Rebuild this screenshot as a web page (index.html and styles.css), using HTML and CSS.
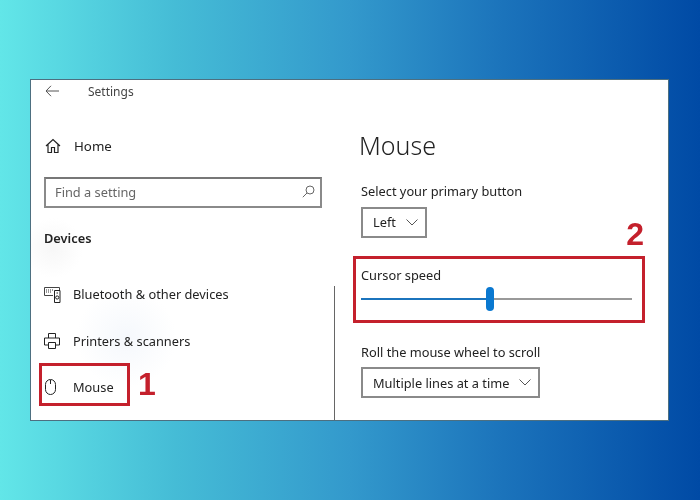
FILE: index.html
```html
<!DOCTYPE html>
<html lang="en">
<head>
<meta charset="utf-8">
<title>Settings - Mouse</title>
<link rel="stylesheet" href="styles.css">
</head>
<body>
<div class="window">
  <aside class="sidebar">
    <div class="titlebar">
      <svg class="back" width="14" height="12" viewBox="0 0 14 12"><path d="M6 .8 1 6l5 5.2M1 6h13" fill="none" stroke="#555" stroke-width="1"/></svg>
      <span class="title">Settings</span>
    </div>
    <div class="nav-item home">
      <svg class="icon" width="16" height="16" viewBox="0 0 16 16"><path d="M1 8 8 1.500 15 8M3 6.500V14.500h3.500V9.500h3V14.500H13V6.500" fill="none" stroke="#222" stroke-width="1.200"/></svg>
      <span>Home</span>
    </div>
    <div class="search">
      <span>Find a setting</span>
      <svg width="13" height="13" viewBox="0 0 13 13"><circle cx="8" cy="5" r="4" fill="none" stroke="#666"/><path d="M5 8 .8 12.200" stroke="#666" fill="none"/></svg>
    </div>
    <div class="section">Devices</div>
    <div class="nav-item bluetooth">
      <svg class="icon" width="17" height="17" viewBox="0 0 17 17"><path d="M9 9.500H.5v-8h15v2.500" fill="none" stroke="#444"/><path d="M2 4h7M2 6h5" stroke="#333" stroke-width="1.200" stroke-dasharray="1 1"/><path d="M10.500 4.500h5.500v12h-5.500z" fill="#fff" stroke="#222"/><circle cx="13.200" cy="11.500" r="1.600" fill="none" stroke="#222"/><path d="M12.500 7h1.500" stroke="#222"/></svg>
      <span>Bluetooth &amp; other devices</span>
    </div>
    <div class="nav-item printers">
      <svg class="icon" width="16" height="16" viewBox="0 0 16 16"><path d="M4.500 5V.5h7V5M4 12H.5V5h15v7H12M4.500 9.500h7v6h-7z" fill="none" stroke="#222"/></svg>
      <span>Printers &amp; scanners</span>
    </div>
    <div class="nav-item mouse">
      <svg class="icon" width="12" height="16" viewBox="0 0 12 16"><rect x=".5" y=".5" width="10" height="15" rx="5" fill="none" stroke="#222"/><path d="M5.500 1v4" stroke="#222"/></svg>
      <span>Mouse</span>
      <div class="callout callout-one"></div>
      <strong class="badge badge-one">1</strong>
    </div>
  </aside>
  <main class="content">
    <h1>Mouse</h1>
    <div class="label">Select your primary button</div>
    <div class="select select-primary">
      <span>Left</span>
      <svg width="12" height="7" viewBox="0 0 12 7"><path d="M.5.5 6 6l5.500-5.500" fill="none" stroke="#555"/></svg>
    </div>
    <div class="speed">
      <strong class="badge badge-two">2</strong>
      <div class="label">Cursor speed</div>
      <div class="slider">
        <div class="slider-fill"></div>
        <div class="slider-thumb"></div>
        <div class="slider-rest"></div>
      </div>
    </div>
    <div class="label">Roll the mouse wheel to scroll</div>
    <div class="select">
      <span>Multiple lines at a time</span>
      <svg width="12" height="7" viewBox="0 0 12 7"><path d="M.5.5 6 6l5.500-5.500" fill="none" stroke="#555"/></svg>
    </div>
  </main>
</div>
</body>
</html>
```
FILE: styles.css
```css
* { box-sizing: border-box; }
html, body { margin: 0; height: 100%; }
body {
  width: 700px;
  height: 500px;
  overflow: hidden;
  padding: 79px 31px 79px 30px;
  background: linear-gradient(90deg, #62e6e8 0%, #45bcd6 25%, #3399cc 50%, #1b73bb 72%, #004aa5 100%);
  font-family: "Noto Sans", "Open Sans", sans-serif;
  font-size: 12.800px;
  color: #222;
}
.window {
  display: flex;
  width: 639px;
  height: 342px;
  background: #fff;
  border: 1px solid #4d6f80;
  filter: blur(0.3px);
}
.sidebar {
  width: 306px;
  padding: 0 13px;
  background:
    radial-gradient(circle 50px at 95px 258px, #f5f8fc, rgba(255, 255, 255, 0)),
    radial-gradient(circle 30px at 22px 168px, #f7f7f7, rgba(255, 255, 255, 0)),
    #fff;
  position: relative;
}
.sidebar::after {
  content: "";
  position: absolute;
  right: 2px;
  top: 206px;
  bottom: 0;
  width: 1.500px;
  background: #666;
}
.titlebar {
  display: flex;
  align-items: center;
  height: 22px;
}
.back { margin-left: 1px; }
.title { margin-left: 29px; font-size: 12px; color: #444; }
.nav-item {
  display: flex;
  align-items: center;
  position: relative;
}
.nav-item span { margin-left: 13px; }
.home { margin-top: 32px; height: 24px; font-size: 13.300px; }
.home .icon { margin-left: 1px; }
.search {
  display: flex;
  align-items: center;
  justify-content: space-between;
  width: 278px;
  height: 31px;
  margin-top: 19px;
  padding: 0 5px 2px 9px;
  border: 2px solid #8a8a8a;
  border-top-color: #777;
  color: #666;
}
.section {
  margin-top: 21px;
  font-weight: 600;
  color: #222;
}
.bluetooth { margin-top: 35px; height: 24px; }
.bluetooth span { margin-left: 12px; }
.printers { margin-top: 23px; height: 24px; }
.mouse { margin-top: 22px; height: 24px; }
.mouse .icon { margin-left: 1px; }
.mouse span { margin-left: 16px; }
.callout-one {
  position: absolute;
  left: -5px;
  top: -12px;
  width: 91px;
  height: 43px;
  border: 3px solid #c4202c;
}
.badge {
  position: absolute;
  color: #c4202c;
  font-family: "Liberation Sans", Arial, sans-serif;
  font-weight: 700;
  font-size: 32px;
  line-height: 32px;
}
.badge-one { left: 94px; top: -7px; }
.badge-two { right: -2px; top: -41px; }
.content {
  flex: 1;
  padding: 0 0 0 24px;
}
h1 {
  margin: 47px 0 0 -2px;
  font-size: 25px;
  font-weight: 300;
  line-height: 36px;
  color: #222;
}
.label { line-height: 18px; }
h1 + .label { margin-top: 19px; }
.select {
  display: inline-flex;
  align-items: center;
  height: 31px;
  margin-top: 6px;
  padding: 0 7px 0 10px;
  border: 2px solid #8a8a8a;
  gap: 10px;
}
.select-primary { margin-top: 7px; padding-bottom: 1px; }
.speed {
  position: relative;
  width: 292px;
  height: 67px;
  margin: 18px 0 20px -8px;
  padding: 7px 0 0 5px;
  border: 3px solid #c4202c;
}
.slider {
  display: flex;
  align-items: center;
  width: 271px;
  height: 24px;
  margin-top: 3px;
}
.slider-fill { width: 125px; height: 2px; background: #1b74bd; }
.slider-thumb { width: 8px; height: 24px; border-radius: 4px; background: #0a78d0; }
.slider-rest { flex: 1; height: 2px; background: #999; }
```
